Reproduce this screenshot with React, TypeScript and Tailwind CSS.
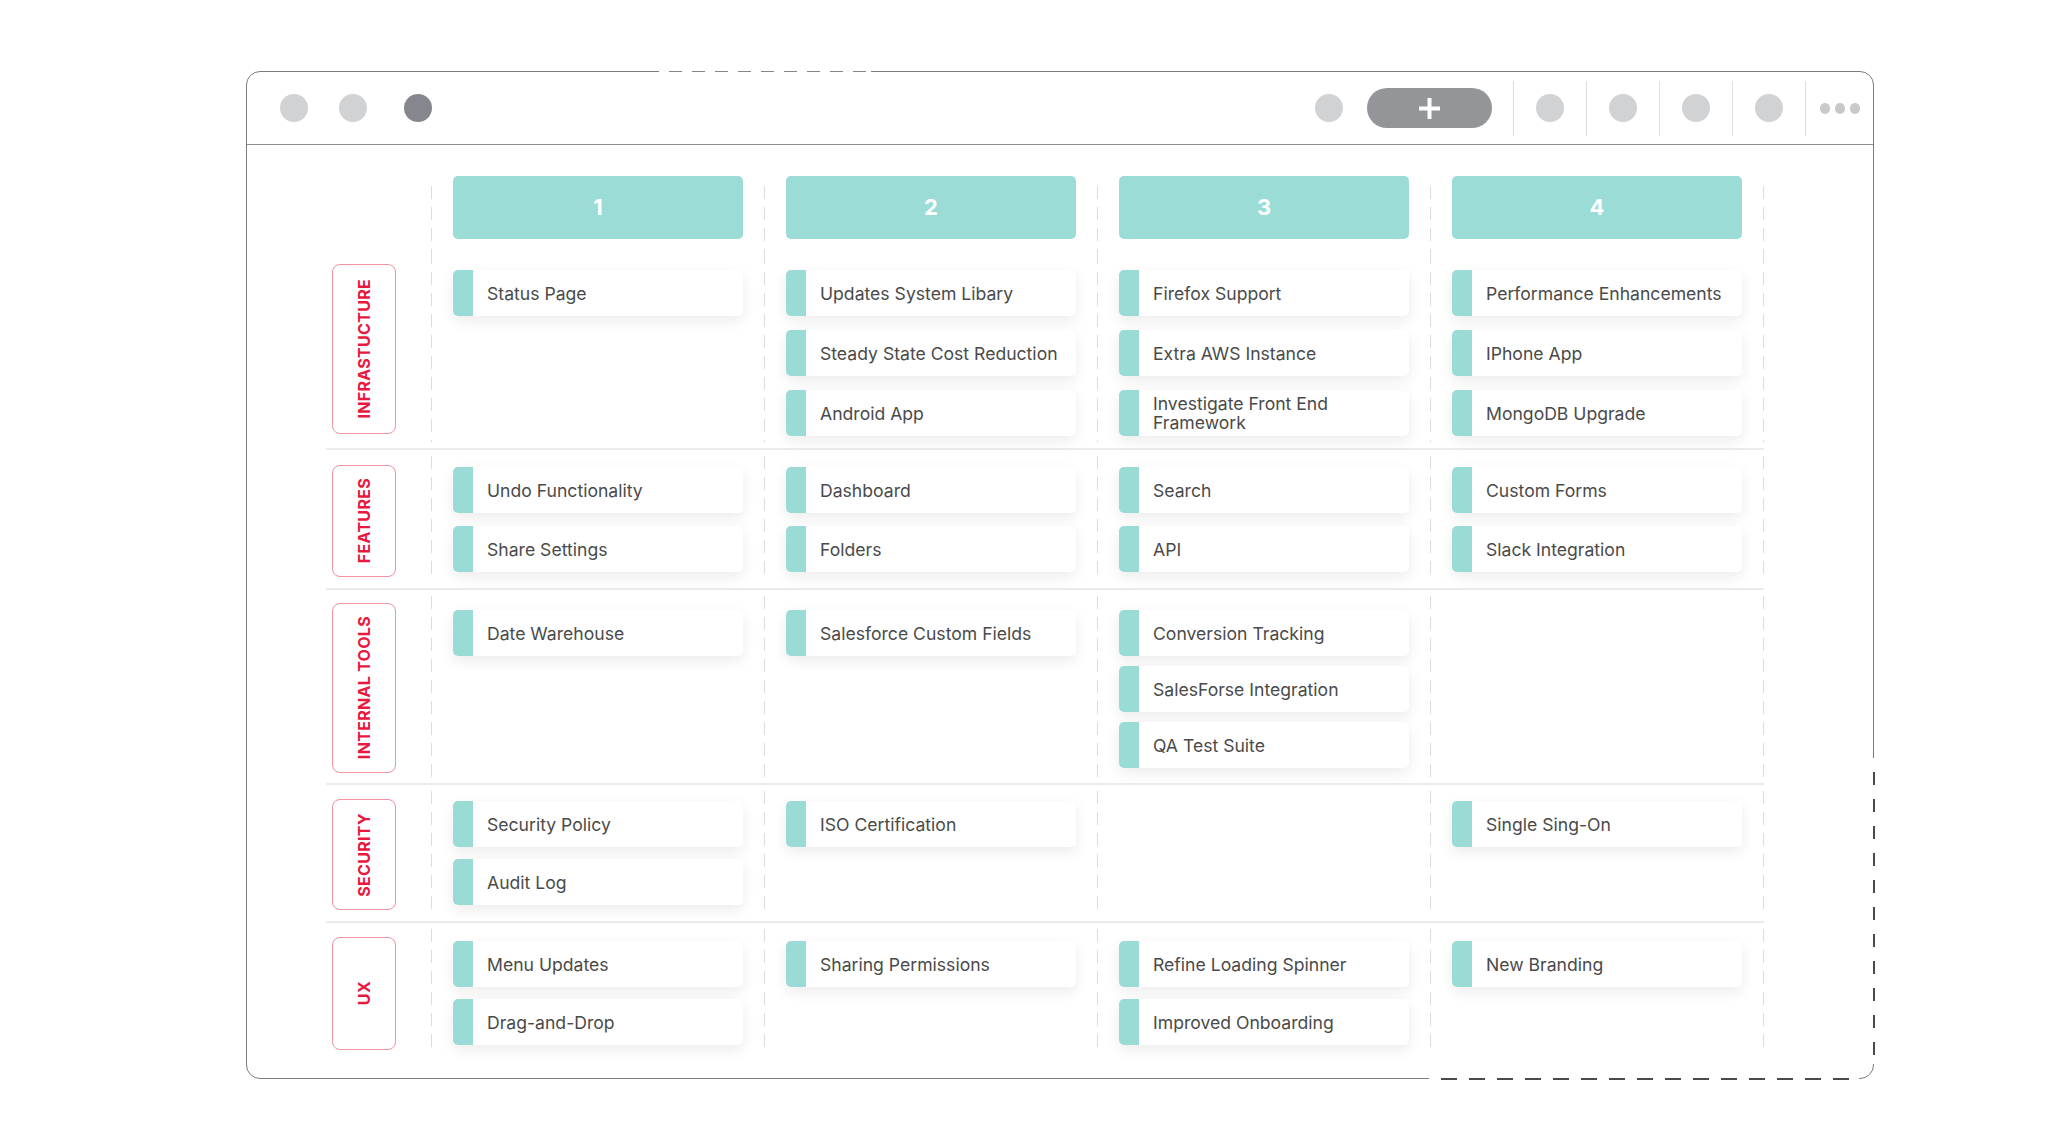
import React from 'react';

const font = { fontFamily: 'Inter, "Open Sans", sans-serif' };

type Row = {
  label: string;
  cols: string[][];
  cell: string;
  labelCell: string;
  dash: string;
  line: boolean;
};

const rows: Row[] = [
  {
    label: 'Infrastucture',
    cols: [
      ['Status Page'],
      ['Updates System Libary', 'Steady State Cost Reduction', 'Android App'],
      ['Firefox Support', 'Extra AWS Instance', 'Investigate Front End\nFramework'],
      ['Performance Enhancements', 'IPhone App', 'MongoDB Upgrade'],
    ],
    cell: 'pt-[19px] pb-[12px] gap-[14px]',
    labelCell: 'pt-[13px] pb-[14px]',
    dash: 'mt-0 mb-[6px]',
    line: true,
  },
  {
    label: 'Features',
    cols: [
      ['Undo Functionality', 'Share Settings'],
      ['Dashboard', 'Folders'],
      ['Search', 'API'],
      ['Custom Forms', 'Slack Integration'],
    ],
    cell: 'pt-[17px] pb-[16px] gap-[13px]',
    labelCell: 'pt-[15px] pb-[11px]',
    dash: 'mt-[6px] mb-[6px]',
    line: true,
  },
  {
    label: 'Internal Tools',
    cols: [
      ['Date Warehouse'],
      ['Salesforce Custom Fields'],
      ['Conversion Tracking', 'SalesForse Integration', 'QA Test Suite'],
      [],
    ],
    cell: 'pt-[20px] pb-[15px] gap-[10px]',
    labelCell: 'pt-[13px] pb-[10px]',
    dash: 'mt-[6px] mb-[6px]',
    line: true,
  },
  {
    label: 'Security',
    cols: [['Security Policy', 'Audit Log'], ['ISO Certification'], [], ['Single Sing-On']],
    cell: 'pt-[16px] pb-[16px] gap-[12px]',
    labelCell: 'pt-[14px] pb-[11px]',
    dash: 'mt-[6px] mb-[6px]',
    line: true,
  },
  {
    label: 'UX',
    cols: [
      ['Menu Updates', 'Drag-and-Drop'],
      ['Sharing Permissions'],
      ['Refine Loading Spinner', 'Improved Onboarding'],
      ['New Branding'],
    ],
    cell: 'pt-[18px] pb-[6px] gap-[12px]',
    labelCell: 'pt-[14px] pb-[1px]',
    dash: 'mt-[6px] mb-0',
    line: false,
  },
];

const gridCols = 'grid w-[1438px] grid-cols-[105px_1px_332px_1px_332px_1px_332px_1px_332px_1px]';

const Dash = ({ className }: { className: string }) => (
  <div
    className={`w-px self-stretch bg-[repeating-linear-gradient(to_bottom,#dcdcdc_0px,#dcdcdc_13px,transparent_13px,transparent_21px)] ${className}`}
  />
);

const Card = ({ text }: { text: string }) => (
  <div className="flex h-[46px] rounded-[5px] bg-white shadow-[0_5px_14px_rgba(0,0,0,0.08)] overflow-hidden">
    <div className="w-[20px] shrink-0 bg-[#9bdbd6]" />
    <div className="flex items-center pl-[14px] text-[17.6px] leading-[19px] text-[#4a4a4a] whitespace-pre-line">
      {text}
    </div>
  </div>
);

const Dot = ({ dark }: { dark?: boolean }) => (
  <div className={`w-[28px] h-[28px] rounded-full ${dark ? 'bg-[#86868f]' : 'bg-[#d1d2d4]'}`} />
);

const Sep = () => <div className="w-px h-[55px] bg-[#dedede]" />;

export default function App() {
  return (
    <div className="min-h-screen bg-white pt-[71px] pl-[246px]" style={font}>
      <div className="relative w-[1628px] h-[1008px] rounded-[14px] border-[1.5px] border-[#7b7c7f] bg-white">
        {/* dashed border pieces */}
        <div className="absolute top-[-1.5px] left-[412px] w-[212px] h-[1.5px] bg-[repeating-linear-gradient(to_right,#fff_0px,#fff_10px,#85868a_10px,#85868a_23px)]" />
        <div className="absolute right-[-1.5px] top-[686px] bottom-[14px] w-[1.5px] bg-[repeating-linear-gradient(to_bottom,#fff_0px,#fff_14px,#4a4a4d_14px,#4a4a4d_27px)]" />
        <div className="absolute bottom-[-1.5px] left-[1182px] right-[14px] h-[1.5px] bg-[repeating-linear-gradient(to_right,#fff_0px,#fff_12px,#4a4a4d_12px,#4a4a4d_28px)]" />

        {/* Toolbar */}
        <div className="h-[73px] border-b-[1.5px] border-[#8e8f92] flex items-center pl-[33px] pr-[13px]">
          <Dot />
          <div className="ml-[31px]">
            <Dot />
          </div>
          <div className="ml-[37px]">
            <Dot dark />
          </div>
          <div className="flex-1" />
          <Dot />
          <div className="ml-[24px] w-[125px] h-[40px] rounded-full bg-[#939598] flex items-center justify-center">
            <svg width="21" height="21" viewBox="0 0 21 21">
              <rect x="8.5" y="0" width="4" height="21" fill="#fff" />
              <rect x="0" y="8.5" width="21" height="4" fill="#fff" />
            </svg>
          </div>
          <div className="ml-[21px] flex items-center gap-[22px]">
            <Sep />
            <Dot />
            <Sep />
            <Dot />
            <Sep />
            <Dot />
            <Sep />
            <Dot />
            <Sep />
          </div>
          <div className="ml-[14px] flex items-center gap-[5px]">
            <div className="w-[10px] h-[11px] rounded-full bg-[#c8c9cb]" />
            <div className="w-[10px] h-[11px] rounded-full bg-[#c8c9cb]" />
            <div className="w-[10px] h-[11px] rounded-full bg-[#c8c9cb]" />
          </div>
        </div>

        {/* Board */}
        <div className="pl-[79px]">
          <div className={gridCols}>
            <div />
            {[1, 2, 3, 4].map((n) => (
              <React.Fragment key={n}>
                <Dash className="mt-[41px]" />
                <div className="pt-[31px] pb-[12px] px-[21px]">
                  <div className="h-[63px] rounded-[5px] bg-[#9cdcd7] flex items-center justify-center text-white font-bold text-[22px]">
                    {n}
                  </div>
                </div>
              </React.Fragment>
            ))}
            <Dash className="mt-[41px]" />
          </div>

          {rows.map((row) => (
            <div
              key={row.label}
              className={`${gridCols} ${row.line ? 'border-b-2 border-[#ebebeb]' : ''}`}
            >
              <div className={`flex flex-col pl-[6px] ${row.labelCell}`}>
                <div className="flex-1 w-[64px] rounded-[8px] border-[1.5px] border-[#f2919f] flex items-center justify-center">
                  <span className="[writing-mode:vertical-rl] rotate-180 uppercase font-bold text-[16px] tracking-[0.3px] text-[#e8183e] whitespace-nowrap">
                    {row.label}
                  </span>
                </div>
              </div>
              {row.cols.map((items, i) => (
                <React.Fragment key={i}>
                  <Dash className={row.dash} />
                  <div className={`flex flex-col px-[21px] ${row.cell}`}>
                    {items.map((t) => (
                      <Card key={t} text={t} />
                    ))}
                  </div>
                </React.Fragment>
              ))}
              <Dash className={row.dash} />
            </div>
          ))}
        </div>
      </div>
    </div>
  );
}
